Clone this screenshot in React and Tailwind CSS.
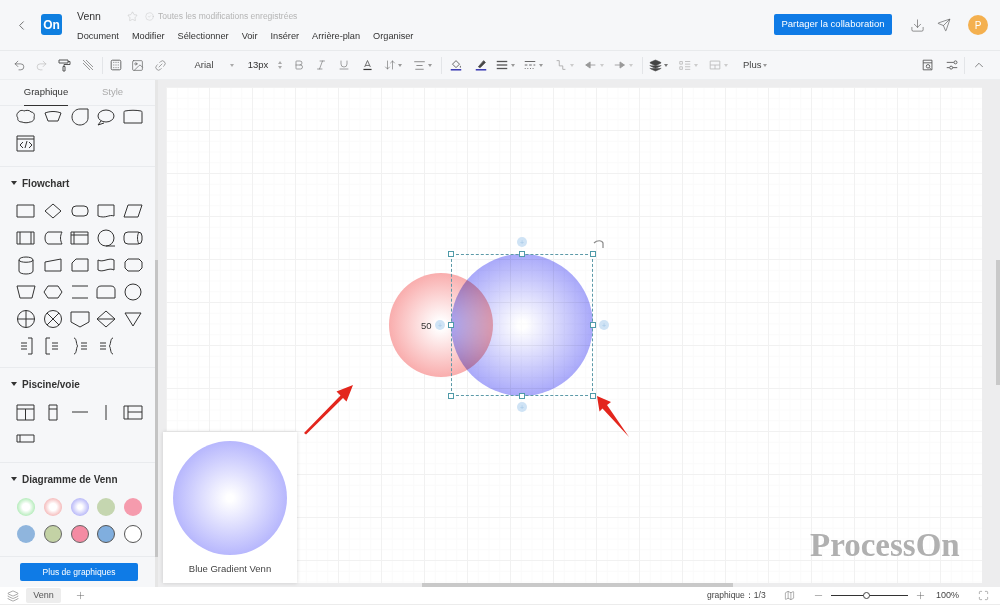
import React from "react";
import { ChevronLeft, Star, CircleCheck, Download, Send, Undo2, Redo2, Image, Link2, Bold, Italic, Underline, ChevronUp, Plus, Minus, Layers, Map, Maximize, AlignCenter, ArrowDownUp } from "lucide-react";

const Caret = ({ c = "border-t-[#999]" }) => <span className={`inline-block w-0 h-0 border-x-[2.5px] border-x-transparent border-t-[3px] ${c}`} />;

const S = ({ children, w = 26, h = 20 }) => (
  <svg width={w} height={h} viewBox="0 0 26 20" fill="none" stroke="#333" strokeWidth="1" strokeLinejoin="round">{children}</svg>
);

const topShapes = [
  <path d="M5 6c1-3 5-3 6-2 2-1 6-1 7 1 3 0 4 3 3 5 1 3-2 5-4 5-2 1-6 1-8 0-3 0-5-2-4-4-2-2-1-5 0-5z" />,
  <path d="M5 6c5-2 11-2 16 0l-3 8H8z" />,
  <path d="M5 10c0-5 4-8 8-8h8v9c0 4-4 7-8 7s-8-3-8-8z" />,
  <><ellipse cx="13" cy="9" rx="8" ry="6" /><path d="M8 14l-3 4 6-2" /></>,
  <path d="M5 4c5-1 11-1 16 0 1 0 1 1 1 2v10H4V6c0-1 0-2 1-2z" />,
  <><rect x="4" y="2" width="17" height="15" /><path d="M4 5h17" /><path d="M10 8l-3 3 3 3M16 8l3 3-3 3M14 7l-2 7" /></>,
];

const flowShapes = [
  <rect x="4" y="4" width="17" height="12" />,
  <path d="M13 3l8 7-8 7-8-7z" />,
  <rect x="5" y="5" width="16" height="10" rx="4" />,
  <path d="M5 4h16v11c-5-2-8 3-16 0z" />,
  <path d="M8 4h14l-4 12H4z" />,
  <><rect x="4" y="4" width="17" height="12" /><path d="M7 4v12M18 4v12" /></>,
  <path d="M8 4h14c-2 4-2 8 0 12H8c-2-1-3-3-3-6s1-5 3-6z" />,
  <><rect x="4" y="4" width="17" height="12" /><path d="M4 7h17M7 4v12" /></>,
  <><circle cx="13" cy="10" r="8" /><path d="M13 18h9" /></>,
  <><rect x="4" y="4" width="18" height="12" rx="4" /><path d="M19 4c-2 3-2 9 0 12" /></>,
  <><path d="M6 5c0-4 14-4 14 0v11c0 4-14 4-14 0z" /><path d="M6 5c0 3 14 3 14 0" /></>,
  <path d="M5 7l16-3v12H5z" />,
  <path d="M9 4h12v12H5V8z" />,
  <path d="M5 5c5 3 11-3 16 0v10c-5-3-11 3-16 0z" />,
  <path d="M8 4h11l3 3v6l-3 3H8l-3-3V7z" />,
  <path d="M4 4h18l-3 12H7z" />,
  <path d="M8 4h10l4 6-4 6H8l-4-6z" />,
  <path d="M5 4h16M5 16h16" />,
  <path d="M8 4h10c3 0 4 2 4 4v8H4V8c0-2 1-4 4-4z" />,
  <circle cx="13" cy="10" r="8" />,
  <><circle cx="13" cy="10" r="8.5" /><path d="M4.5 10h17M13 1.5v17" /></>,
  <><circle cx="13" cy="10" r="8.5" /><path d="M7 4l12 12M19 4L7 16" /></>,
  <path d="M4 3h18v10l-9 5-9-5z" />,
  <><path d="M13 2l9 8-9 8-9-8z" /><path d="M4 10h18" /></>,
  <path d="M5 4h16l-8 13z" />,
  <><path d="M15 2h4v16h-4" /><path d="M8 7h6M8 10h6M8 13h6" /></>,
  <><path d="M10 2H6v16h4" /><path d="M12 7h6M12 10h6M12 13h6" /></>,
  <><path d="M7 2c3 0 2 8 4 8-2 0-1 8-4 8" /><path d="M14 7h6M14 10h6M14 13h6" /></>,
  <><path d="M20 2c-3 0-2 8-4 8 2 0 1 8 4 8" /><path d="M7 7h6M7 10h6M7 13h6" /></>,
];

const poolShapes = [
  <><rect x="4" y="3" width="17" height="15" /><path d="M4 7h17M12.5 7v11" /></>,
  <><rect x="9" y="3" width="8" height="15" /><path d="M9 7h8" /></>,
  <path d="M5 10h16" />,
  <path d="M13 3v15" />,
  <><rect x="4" y="4" width="18" height="13" /><path d="M8 4v13M8 10h14" /></>,
  <><rect x="4" y="6" width="17" height="7" /><path d="M7 6v7" /></>,
];

const venn = [
  "bg-[radial-gradient(circle_closest-side,#ffffff_40%,#b5ecbb_100%)]",
  "bg-[radial-gradient(circle_closest-side,#ffffff_40%,#f5bcbc_100%)]",
  "bg-[radial-gradient(circle_closest-side,#ffffff_25%,#b9b9f8_100%)]",
  "bg-[#c5d6b0]",
  "bg-[#f59bad]",
  "bg-[#8fb5dd]",
  "bg-[#c3d2a5] border border-[#666]",
  "bg-[#f48ba3] border border-[#666]",
  "bg-[#80aede] border border-[#555]",
  "bg-white border border-[#555]",
];

const ShapeGrid = ({ items }) => (
  <div className="grid grid-cols-[repeat(5,26.7px)] auto-rows-[27px] pl-[13px]">
    {items.map((s, i) => <div key={i} className="flex items-center justify-center"><S>{s}</S></div>)}
  </div>
);

const Title = ({ children }) => (
  <div className="flex items-center gap-[5px] pl-[11px] h-[14px] text-[10px] font-bold text-[#333]">
    <span className="inline-block w-0 h-0 border-x-[3px] border-x-transparent border-t-[4px] border-t-[#333]" />
    {children}
  </div>
);

const Ico = ({ children, w = 16, h = 14 }) => (
  <svg width={w} height={h} viewBox="0 0 16 14" fill="none" stroke="#555" strokeWidth="1">{children}</svg>
);

const Slot = ({ w, children }) => <div className={`${w} shrink-0 flex items-center justify-center gap-[2px]`}>{children}</div>;
const Sep = () => <div className="w-px h-[17px] bg-[#e3e5e8] shrink-0" />;

function Toolbar() {
  const ic = { size: 13, strokeWidth: 1.2, color: "#555" };
  return (
    <div className="h-[29px] flex items-center pl-[8px] bg-[#f6f7f9] border-b border-[#eceef0] text-[#444]">
      <Slot w="w-[22px]"><Undo2 {...ic} /></Slot>
      <Slot w="w-[22px]"><Redo2 {...ic} color="#bbb" /></Slot>
      <Slot w="w-[24px]"><Ico><path d="M3 2h9v3H3zM12 3.5h2v3H8v2M7 8.5h2V13H7z" /></Ico></Slot>
      <Slot w="w-[24px]"><Ico><path d="M3 2l10 10M6 2l7 7M3 5l7 7" stroke="#999" /></Ico></Slot>
      <div className="w-[2px] shrink-0" />
      <Sep />
      <Slot w="w-[25px]"><Ico w={14}><rect x="2.5" y="1.5" width="11" height="11" rx="1.5" /><path d="M5 4h1M7.5 4h1M10 4h1M5 7h1M7.5 7h1M10 7h1M5 10h1M7.5 10h1M10 10h1" /></Ico></Slot>
      <Slot w="w-[19px]"><Image {...ic} /></Slot>
      <Slot w="w-[26px]"><Link2 {...ic} className="-rotate-45" color="#777" /></Slot>
      <div className="w-[15px] shrink-0" />
      <div className="w-[32px] shrink-0 text-[9.5px] text-[#444] text-center">Arial</div>
      <div className="w-[23px] shrink-0 flex justify-center"><Caret c="border-t-[#aaa]" /></div>
      <div className="w-[30px] shrink-0 text-[9.5px] text-[#333] text-center">13px</div>
      <div className="w-[14px] shrink-0 flex flex-col items-center gap-[2px]">
        <span className="w-0 h-0 border-x-[2.5px] border-x-transparent border-b-[3px] border-b-[#aaa]" /><Caret c="border-t-[#aaa]" />
      </div>
      <Slot w="w-[23px]"><Bold size={12} strokeWidth={1.2} color="#666" /></Slot>
      <Slot w="w-[22px]"><Italic size={12} strokeWidth={1.2} color="#666" /></Slot>
      <Slot w="w-[23px]"><Underline size={12} strokeWidth={1.2} color="#666" /></Slot>
      <Slot w="w-[24px]"><Ico w={13}><path d="M4.5 9.5L8 1.5l3.5 8M5.5 7.5h5" /><path d="M3 12.5h10" stroke="#333" strokeWidth="1.5" /></Ico></Slot>
      <Slot w="w-[28px]"><ArrowDownUp size={12} strokeWidth={1.2} color="#666" /><Caret /></Slot>
      <Slot w="w-[30px]"><AlignCenter {...ic} /><Caret /></Slot>
      <div className="w-[4px] shrink-0" />
      <Sep />
      <Slot w="w-[28px]"><Ico w={14}><path d="M4 6l4-4 4 4-4 4zM13 8v2" /><path d="M2 12.5h12" stroke="#1c1ca8" strokeWidth="1.5" /></Ico></Slot>
      <Slot w="w-[22px]"><Ico w={14}><path d="M5 9l6-7 2 2-6 6z" fill="#444" /><path d="M2 12.5h12" stroke="#1c1ca8" strokeWidth="1.5" /></Ico></Slot>
      <Slot w="w-[25px]"><Ico w={14}><path d="M2 3h12" strokeWidth="1.5" /><path d="M2 7h12" strokeWidth="1.5" /><path d="M2 11h12" strokeWidth="1.5" /></Ico><Caret /></Slot>
      <Slot w="w-[31px]"><Ico w={14}><path d="M2 3h12M2 7h3M7 7h3M12 7h2M2 11h1M5 11h1M8 11h1M11 11h1" /></Ico><Caret /></Slot>
      <Slot w="w-[32px]"><Ico w={14}><path d="M3 2h3v6h4v4h3" stroke="#aaa" /></Ico><Caret c="border-t-[#ccc]" /></Slot>
      <Slot w="w-[28px]"><Ico w={14}><path d="M2 7h11M2 7l5-3.5v7z" stroke="#999" fill="#999" /></Ico><Caret c="border-t-[#ccc]" /></Slot>
      <Slot w="w-[30px]"><Ico w={14}><path d="M2 7h11M13 7L8 3.5v7z" stroke="#999" fill="#999" /></Ico><Caret c="border-t-[#ccc]" /></Slot>
      <div className="w-[4px] shrink-0" />
      <Sep />
      <Slot w="w-[30px]"><Layers size={13} fill="#444" color="#444" strokeWidth={1.2} /><Caret c="border-t-[#777]" /></Slot>
      <Slot w="w-[29px]"><Ico w={14}><path d="M2 3h3v3H2zM8 3h6M2 9h3v3H2zM8 6h6M8 9h6M8 12h6" stroke="#bbb" /></Ico><Caret c="border-t-[#ccc]" /></Slot>
      <Slot w="w-[31px]"><Ico w={14}><path d="M2.5 2.5h11v9h-11zM2.5 7h11M8 7v4.5" stroke="#bbb" /></Ico><Caret c="border-t-[#ccc]" /></Slot>
      <div className="w-[37px] shrink-0 flex items-center gap-[2px] text-[9.5px] text-[#444] pl-[10px]">Plus<Caret /></div>
      <div className="flex-1" />
      <Slot w="w-[24px]"><Ico w={14}><path d="M2.5 1.5h10v11h-10zM2.5 4.5h10" /><circle cx="8" cy="8.5" r="2" /><path d="M9.5 10l2 2" /></Ico></Slot>
      <Slot w="w-[24px]"><Ico w={14}><path d="M2 4h8M2 10h3" /><circle cx="12" cy="4" r="1.7" /><circle cx="7" cy="10" r="1.7" /><path d="M9 10h5" /></Ico></Slot>
      <Sep />
      <Slot w="w-[28px]"><ChevronUp size={14} strokeWidth={1.2} color="#555" /></Slot>
      <div className="w-[7px] shrink-0" />
    </div>
  );
}

function Header() {
  return (
    <div className="h-[51px] bg-[#f6f7f9] border-b border-[#e8eaec] flex items-center">
      <div className="w-[41px] flex justify-center pl-[1px]"><ChevronLeft size={15} strokeWidth={1.3} color="#555" /></div>
      <div className="w-[21px] h-[21px] rounded-[3px] bg-[#0f7fe0] text-white text-[12px] font-bold flex items-center justify-center -mt-[1px]">On</div>
      <div className="ml-[15px] flex flex-col gap-[6px] pt-[3px]">
        <div className="flex items-center h-[14px]">
          <span className="text-[10.5px] text-[#333] w-[50px]">Venn</span>
          <Star size={11} strokeWidth={1} color="#bbb" />
          <span className="w-[7px]" />
          <CircleCheck size={9} strokeWidth={1} color="#bbb" />
          <span className="ml-[4px] text-[8.5px] text-[#b4b4b4]">Toutes les modifications enregistrées</span>
        </div>
        <div className="flex gap-[13px] text-[9.2px] text-[#333]">
          <span>Document</span><span>Modifier</span><span>Sélectionner</span><span>Voir</span><span>Insérer</span><span>Arrière-plan</span><span>Organiser</span>
        </div>
      </div>
      <div className="flex-1" />
      <div className="w-[118px] h-[21px] rounded-[2px] bg-[#0f7be6] text-white text-[9.5px] flex items-center justify-center -mt-[1px]">Partager la collaboration</div>
      <div className="w-[45px] flex justify-center pl-[5px]"><Download size={15} strokeWidth={1} color="#555" /></div>
      <Send size={14} strokeWidth={1} color="#444" />
      <div className="ml-[17px] mr-[12px] w-[20px] h-[20px] rounded-full bg-[#f4b04f] text-white text-[10px] flex items-center justify-center">P</div>
    </div>
  );
}

function Sidebar() {
  return (
    <div className="w-[155px] shrink-0 bg-[#f6f7f9] h-full flex flex-col">
      <div className="h-[26px] border-b border-[#e9ebee] flex text-[9.5px]">
        <div className="ml-[24px] w-[44px] h-[26px] border-b border-[#333] text-[#333] flex items-center justify-center">Graphique</div>
        <div className="ml-[34px] text-[#aaa] flex items-center">Style</div>
      </div>
      <div className="h-[61px] border-b border-[#e9ebee]"><div className="-mt-[3px]"><ShapeGrid items={topShapes} /></div></div>
      <div className="pt-[9px] h-[201px] border-b border-[#e9ebee]">
        <Title>Flowchart</Title>
        <div className="mt-[7px]"><ShapeGrid items={flowShapes} /></div>
      </div>
      <div className="pt-[9px] h-[95px] border-b border-[#e9ebee]">
        <Title>Piscine/voie</Title>
        <div className="mt-[7px]"><ShapeGrid items={poolShapes} /></div>
      </div>
      <div className="pt-[9px] h-[94px] border-b border-[#e9ebee]">
        <Title>Diagramme de Venn</Title>
        <div className="mt-[7px] pl-[13px] grid grid-cols-[repeat(5,26.7px)] auto-rows-[27px]">
          {venn.map((v, i) => <div key={i} className="flex items-center justify-center"><div className={`w-[18px] h-[18px] rounded-full ${v}`} /></div>)}
        </div>
      </div>
      <div className="flex justify-center pt-[6px] pl-[3px]">
        <div className="w-[118px] h-[18px] rounded-[2px] bg-[#0f7be6] text-white text-[8.5px] flex items-center justify-center">Plus de graphiques</div>
      </div>
    </div>
  );
}

const Handle = ({ className }) => <div className={`absolute w-[6px] h-[6px] -ml-[3px] -mt-[3px] bg-white border border-[#4f9aa8] ${className}`} />;
const Dot = ({ className }) => (
  <div className={`absolute w-[10px] h-[10px] -ml-[5px] -mt-[5px] rounded-full bg-[#cfe3f5] flex items-center justify-center text-[7px] leading-none text-[#a5c8e6] ${className}`}>+</div>
);

function Canvas() {
  return (
    <div className="flex-1 relative bg-[#ededee] overflow-hidden">
      <div className="absolute left-[8px] top-[7px] w-[816px] h-[496px] bg-white bg-[linear-gradient(#f1f1f1_1px,transparent_1px),linear-gradient(90deg,#f1f1f1_1px,transparent_1px),linear-gradient(#fafafa_1px,transparent_1px),linear-gradient(90deg,#fafafa_1px,transparent_1px)] bg-[size:43px_43px,43px_43px,10.75px_10.75px,10.75px_10.75px]">
        <div className="absolute left-[223px] top-[186px] w-[104px] h-[104px] rounded-full bg-[radial-gradient(circle_closest-side,#ffffff_0%,#ffffff_8%,#f9adad_100%)]" />
        <div className="absolute left-[285px] top-[167px] w-[142px] h-[142px] rounded-full mix-blend-multiply bg-[radial-gradient(circle_closest-side,#ffffff_0%,#ffffff_6%,#a9a9fa_100%)]" />
        <div className="absolute left-[255px] top-[232px] text-[9.5px] text-[#333]">50</div>
        <Dot className="left-[274px] top-[238px]" />
        <div className="absolute left-[285px] top-[167px] w-[142px] h-[142px] border border-dashed border-[#5d9aa8]" />
        <Handle className="left-[285px] top-[167px]" />
        <Handle className="left-[356px] top-[167px]" />
        <Handle className="left-[427px] top-[167px]" />
        <Handle className="left-[285px] top-[238px]" />
        <Handle className="left-[427px] top-[238px]" />
        <Handle className="left-[285px] top-[309px]" />
        <Handle className="left-[356px] top-[309px]" />
        <Handle className="left-[427px] top-[309px]" />
        <Dot className="left-[356px] top-[155px]" />
        <Dot className="left-[356px] top-[320px]" />
        <Dot className="left-[438px] top-[238px]" />
        <svg className="absolute left-[425px] top-[152px]" width="16" height="14" viewBox="0 0 16 14" fill="none" stroke="#888" strokeWidth="1.2"><path d="M3 4c3-3 8-3 9 0v5" /></svg>
        <svg className="absolute left-[130px] top-[290px]" width="340" height="70" viewBox="0 0 340 70" fill="#e3261d">
          <path d="M8 56L44.5 18.5l-4-4L57 8l-6.5 16.5-3.5-3.5L10 57.5z" />
          <path d="M301 19l14 6-4 3L333 60 306.5 31.5l-3 3z" />
        </svg>
        <div className="absolute left-[644px] top-[440px] text-[33px] leading-[36px] font-bold text-[#b0b0b0] font-['Liberation_Serif',serif]">ProcessOn</div>
      </div>
      <div className="absolute left-[264px] bottom-0 w-[311px] h-[4px] bg-[#c9c9c9]" />
      <div className="absolute right-0 top-[180px] w-[4px] h-[125px] bg-[#c9c9c9]" />
      <div className="absolute left-[5px] top-[352px] w-[134px] h-[151px] bg-white shadow-[0_0_4px_rgba(0,0,0,0.15)] flex flex-col items-center pt-[9px]">
        <div className="w-[114px] h-[114px] rounded-full bg-[radial-gradient(circle_closest-side,#ffffff_0%,#ffffff_6%,#b7b7fd_100%)]" />
        <div className="mt-[7px] text-[9.5px] text-[#444]">Blue Gradient Venn</div>
      </div>
    </div>
  );
}

function Bottom() {
  return (
    <div className="h-[18px] bg-white flex items-center text-[9px] text-[#444] border-b border-[#ececec]">
      <div className="w-[26px] flex justify-center"><Layers size={12} strokeWidth={1} color="#555" /></div>
      <div className="w-[35px] h-[15px] rounded-[2px] bg-[#ededed] flex items-center justify-center text-[#555]">Venn</div>
      <div className="w-[38px] flex justify-center"><Plus size={11} strokeWidth={1} color="#555" /></div>
      <div className="flex-1" />
      <div className="w-[67px] text-[8.5px] text-[#444] whitespace-nowrap">graphique：1/3</div>
      <div className="w-[30px] flex justify-center"><Map size={11} strokeWidth={1} color="#555" /></div>
      <div className="w-[9px]" />
      <Minus size={11} strokeWidth={1} color="#555" />
      <div className="relative ml-[7px] w-[77px] h-px bg-[#333]">
        <div className="absolute left-[32px] -top-[3px] w-[7px] h-[7px] rounded-full bg-white border border-[#444]" />
      </div>
      <div className="ml-[7px]"><Plus size={11} strokeWidth={1} color="#555" /></div>
      <div className="ml-[10px] w-[22px] text-[#444]">100%</div>
      <div className="ml-[20px] mr-[11px]"><Maximize size={11} strokeWidth={1} color="#555" /></div>
    </div>
  );
}

export default function App() {
  return (
    <div className="w-[1000px] h-[605px] overflow-hidden flex flex-col bg-white font-['Liberation_Sans',sans-serif]">
      <Header />
      <Toolbar />
      <div className="h-[507px] flex">
        <Sidebar />
        <div className="w-[3px] bg-[#e6e6e6] relative"><div className="absolute left-0 top-[180px] bottom-[30px] w-[3px] bg-[#c4c4c4]" /></div>
        <Canvas />
      </div>
      <Bottom />
    </div>
  );
}
